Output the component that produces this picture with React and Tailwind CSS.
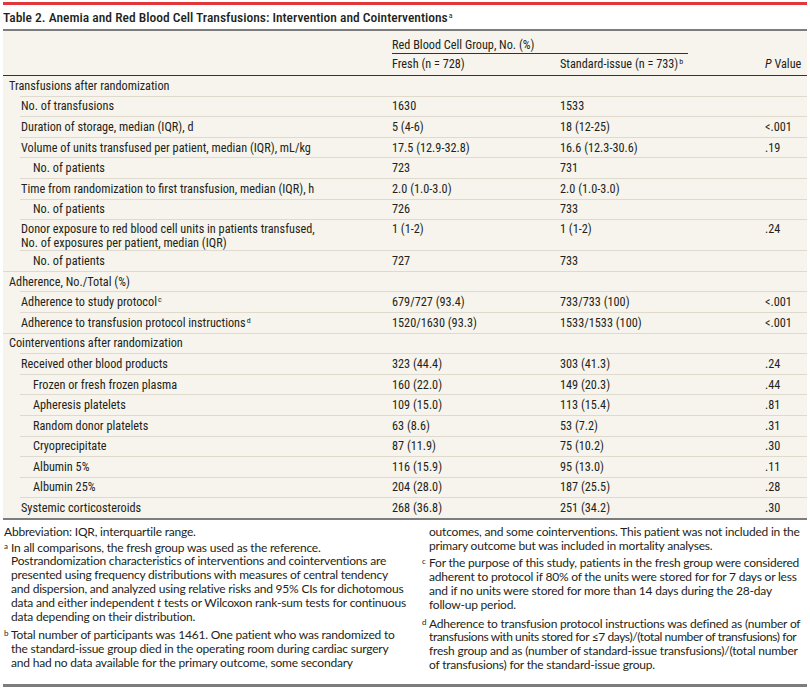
const rows = [
  { lv: 0, label: "Transfusions after randomization" },
  { lv: 1, label: "No. of transfusions", f: "1630", s: "1533" },
  { lv: 1, label: "Duration of storage, median (IQR), d", f: "5 (4-6)", s: "18 (12-25)", p: "<.001" },
  { lv: 1, label: "Volume of units transfused per patient, median (IQR), mL/kg", f: "17.5 (12.9-32.8)", s: "16.6 (12.3-30.6)", p: ".19" },
  { lv: 2, label: "No. of patients", f: "723", s: "731" },
  { lv: 1, label: "Time from randomization to first transfusion, median (IQR), h", f: "2.0 (1.0-3.0)", s: "2.0 (1.0-3.0)" },
  { lv: 2, label: "No. of patients", f: "726", s: "733" },
  {
    lv: 1,
    label: "Donor exposure to red blood cell units in patients transfused,",
    label2: "No. of exposures per patient, median (IQR)",
    f: "1 (1-2)",
    s: "1 (1-2)",
    p: ".24",
  },
  { lv: 2, label: "No. of patients", f: "727", s: "733" },
  { lv: 0, label: "Adherence, No./Total (%)" },
  { lv: 1, label: "Adherence to study protocol", sup: "c", f: "679/727 (93.4)", s: "733/733 (100)", p: "<.001" },
  { lv: 1, label: "Adherence to transfusion protocol instructions", sup: "d", f: "1520/1630 (93.3)", s: "1533/1533 (100)", p: "<.001" },
  { lv: 0, label: "Cointerventions after randomization" },
  { lv: 1, label: "Received other blood products", f: "323 (44.4)", s: "303 (41.3)", p: ".24" },
  { lv: 2, label: "Frozen or fresh frozen plasma", f: "160 (22.0)", s: "149 (20.3)", p: ".44" },
  { lv: 2, label: "Apheresis platelets", f: "109 (15.0)", s: "113 (15.4)", p: ".81" },
  { lv: 2, label: "Random donor platelets", f: "63 (8.6)", s: "53 (7.2)", p: ".31" },
  { lv: 2, label: "Cryoprecipitate", f: "87 (11.9)", s: "75 (10.2)", p: ".30" },
  { lv: 2, label: "Albumin 5%", f: "116 (15.9)", s: "95 (13.0)", p: ".11" },
  { lv: 2, label: "Albumin 25%", f: "204 (28.0)", s: "187 (25.5)", p: ".28" },
  { lv: 1, label: "Systemic corticosteroids", f: "268 (36.8)", s: "251 (34.2)", p: ".30" },
];

function Row({ row, first }) {
  const pad = row.lv === 0 ? "pl-[6px]" : row.lv === 1 ? "pl-[18px]" : "pl-[30px]";
  const line = row.lv === 0 ? "ml-0" : "ml-[17px]";
  const h = row.label2 ? "h-[30px] items-start pt-[2px]" : "h-[19.6px] items-center";
  return (
    <div className="flex flex-col">
      {!first && <div className={"h-px bg-[#dedace] " + line} />}
      <div className={"grid grid-cols-[389px_168px_205px_1fr] whitespace-nowrap " + h}>
        <div className={pad + " leading-[14px]"}>
          <div>
            {row.label}
            {row.sup && <sup className="text-[8px] ml-[1px]">{row.sup}</sup>}
          </div>
          {row.label2 && <div>{row.label2}</div>}
        </div>
        <div className="leading-[14px]">{row.f}</div>
        <div className="leading-[14px]">{row.s}</div>
        <div className="leading-[14px]">{row.p}</div>
      </div>
    </div>
  );
}

function Note({ mark, children, className }) {
  return (
    <div className={"flex " + (className || "")}>
      <span className="w-[7px] shrink-0 text-[8px] leading-[10px]">{mark}</span>
      <div>{children}</div>
    </div>
  );
}

export default function App() {
  return (
    <div className="w-[810px] h-[697px] bg-white text-[#231f20] font-['Roboto_Condensed','Liberation_Sans',sans-serif] overflow-hidden">
      <div className="mx-[3px] mt-[2px] h-[3px] bg-[#e2383c]" />
      <div className="h-[24px] flex items-center px-[3px] text-[13.5px] font-medium whitespace-nowrap">
        <span>
          Table 2. Anemia and Red Blood Cell Transfusions: Intervention and Cointerventions
          <sup className="text-[8px] font-normal ml-[1px]">a</sup>
        </span>
      </div>

      <div className="mx-[3px] text-[12.25px]">
        <div className="bg-[#f6f4ec] border-t-2 border-[#7d7d7d] border-b border-b-[#333] whitespace-nowrap">
          <div className="h-[22px] flex items-end pl-[389px] pb-[1px]">
            <span className="leading-[14px]">Red Blood Cell Group, No. (%)</span>
          </div>
          <div className="ml-[389px] w-[296px] h-px bg-[#333]" />
          <div className="h-[21px] grid grid-cols-[389px_168px_205px_1fr] items-center">
            <div />
            <div>Fresh (n = 728)</div>
            <div>
              Standard-issue (n = 733)<sup className="text-[8px] ml-[1px]">b</sup>
            </div>
            <div>
              <i>P</i> Value
            </div>
          </div>
        </div>

        <div className="bg-[#f6f4ec] border-b-2 border-[#7d7d7d]">
          {rows.map((r, i) => (
            <Row key={i} row={r} first={i === 0} />
          ))}
        </div>
      </div>

      <div className="mx-[3px] grid grid-cols-[419px_1fr] pt-[5px] text-[12px] tracking-[-0.2px] leading-[13.8px] whitespace-nowrap font-['Lato','Liberation_Sans',sans-serif]">
        <div className="pl-[1px]">
          <div>Abbreviation: IQR, interquartile range.</div>
          <Note mark="a" className="mt-[2px]">
            <div>In all comparisons, the fresh group was used as the reference.</div>
            <div>Postrandomization characteristics of interventions and cointerventions are</div>
            <div>presented using frequency distributions with measures of central tendency</div>
            <div>and dispersion, and analyzed using relative risks and 95% CIs for dichotomous</div>
            <div>
              data and either independent <i>t</i> tests or Wilcoxon rank-sum tests for continuous
            </div>
            <div>data depending on their distribution.</div>
          </Note>
          <Note mark="b" className="mt-[5px]">
            <div>Total number of participants was 1461. One patient who was randomized to</div>
            <div>the standard-issue group died in the operating room during cardiac surgery</div>
            <div>and had no data available for the primary outcome, some secondary</div>
          </Note>
        </div>
        <div>
          <Note mark="">
            <div>outcomes, and some cointerventions. This patient was not included in the</div>
            <div>primary outcome but was included in mortality analyses.</div>
          </Note>
          <Note mark="c" className="mt-[4px]">
            <div>For the purpose of this study, patients in the fresh group were considered</div>
            <div>adherent to protocol if 80% of the units were stored for for 7 days or less</div>
            <div>and if no units were stored for more than 14 days during the 28-day</div>
            <div>follow-up period.</div>
          </Note>
          <Note mark="d" className="mt-[5px]">
            <div>Adherence to transfusion protocol instructions was defined as (number of</div>
            <div className="tracking-[-0.4px]">
              transfusions with units stored for ≤7 days)/(total number of transfusions) for
            </div>
            <div>fresh group and as (number of standard-issue transfusions)/(total number</div>
            <div>of transfusions) for the standard-issue group.</div>
          </Note>
        </div>
      </div>
      <div className="mx-[3px] mt-[12px] h-[3px] bg-[#7d7d7d]" />
    </div>
  );
}
